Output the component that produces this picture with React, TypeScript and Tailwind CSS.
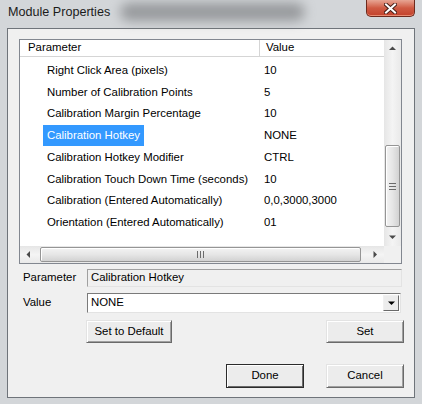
import React from 'react';

const rows: [string, string][] = [
  ['Right Click Area (pixels)', '10'],
  ['Number of Calibration Points', '5'],
  ['Calibration Margin Percentage', '10'],
  ['Calibration Hotkey', 'NONE'],
  ['Calibration Hotkey Modifier', 'CTRL'],
  ['Calibration Touch Down Time (seconds)', '10'],
  ['Calibration (Entered Automatically)', '0,0,3000,3000'],
  ['Orientation (Entered Automatically)', '01'],
];

function Arrow({ dir, color = '#4a4a4a' }: { dir: 'up' | 'down' | 'left' | 'right'; color?: string }) {
  const pts = {
    up: '0,4 7,4 3.5,0.5',
    down: '0,0.5 7,0.5 3.5,4',
    left: '4,0 4,7 0.5,3.5',
    right: '0.5,0 0.5,7 4,3.5',
  }[dir];
  const vertical = dir === 'up' || dir === 'down';
  return (
    <svg width={vertical ? 7 : 5} height={vertical ? 5 : 7} viewBox={vertical ? '0 0 7 5' : '0 0 5 7'}>
      <polygon points={pts} fill={color} />
    </svg>
  );
}

function Button({ label, isDefault, className }: { label: string; isDefault?: boolean; className: string }) {
  return (
    <button
      className={
        'flex items-center justify-center bg-[#ececec] text-[11.4px] text-black ' +
        (isDefault
          ? 'border border-[#2b2b2b] shadow-[inset_1px_1px_0_#ffffff,inset_-1px_-1px_0_#6a6a6a] '
          : 'border border-t-[#e3e3e3] border-l-[#e3e3e3] border-r-[#6a6a6a] border-b-[#6a6a6a] shadow-[inset_1px_1px_0_#ffffff,inset_-1px_-1px_0_#a0a0a0] ') +
        className
      }
    >
      {label}
    </button>
  );
}

export default function App() {
  return (
    <div className="relative flex h-[404px] w-[422px] flex-col overflow-hidden bg-[#d3d6d9] font-['Liberation_Sans',Arial,sans-serif] text-[11.4px] text-black">
      {/* title bar */}
      <div className="relative flex h-[28px] shrink-0 items-start">
        <div className="absolute left-[120px] top-[3px] h-[18px] w-[185px] rounded-full bg-[#6f7174] opacity-60 blur-[6px]" />
        <span className="relative pl-[8px] pt-[4px] text-[12.6px] leading-[16px] text-[#1b1b1b]">Module Properties</span>
        <div className="relative ml-auto mr-[7px] flex h-[17px] w-[49px] items-center justify-center rounded-b-[5px] border border-t-0 border-[#6d2a1d] bg-gradient-to-b from-[#e7a594] via-[#cf5a43] to-[#c2412b] shadow-[inset_0_-1px_0_#e88b72]">
          <svg width="13" height="11" viewBox="0 0 13 11">
            <path d="M2 1.5 L11 9.5 M11 1.5 L2 9.5" stroke="#4a2018" strokeWidth="4" strokeLinecap="square" />
            <path d="M2 1.5 L11 9.5 M11 1.5 L2 9.5" stroke="#ffffff" strokeWidth="2" strokeLinecap="square" />
          </svg>
        </div>
      </div>

      {/* client area */}
      <div className="mx-[7px] flex h-[370px] shrink-0 flex-col border border-[#6f747a] bg-[#f0f0f0]">
        {/* list view */}
        <div className="ml-[11px] mt-[10px] grid h-[225px] w-[383px] grid-cols-[1fr_17px] grid-rows-[1fr_17px] border border-[#828790] bg-white">
          <div className="flex flex-col overflow-hidden">
            <div className="flex h-[17px] shrink-0 border-b border-[#d5d5d5] bg-white">
              <div className="flex w-[240px] items-center border-r border-[#d5d5d5] pl-[8px]">Parameter</div>
              <div className="flex items-center pl-[6px]">Value</div>
            </div>
            <div className="pt-[2.5px]">
              {rows.map(([name, value], i) => (
                <div key={name} className="flex h-[21.75px] items-center">
                  <div className="w-[240px] pl-[23px]">
                    <span
                      className={
                        'inline-flex h-[21px] items-center px-[4px] ' + (i === 3 ? 'bg-[#3399ff] text-white' : '')
                      }
                    >
                      {name}
                    </span>
                  </div>
                  <div className="pl-[4px]">{value}</div>
                </div>
              ))}
            </div>
          </div>

          {/* vertical scrollbar */}
          <div className="flex flex-col bg-gradient-to-r from-[#e6e6e6] via-[#f4f4f4] to-[#e9e9e9]">
            <div className="flex h-[17px] items-center justify-center">
              <Arrow dir="up" />
            </div>
            <div className="relative h-[172px]">
              <div className="absolute left-[1px] top-[88px] flex h-[82px] w-[15px] flex-col items-center justify-center gap-[2px] rounded-[2px] border border-[#959595] bg-gradient-to-r from-[#f3f3f3] via-[#e6e6e6] to-[#d2d2d2] shadow-[inset_1px_1px_0_#ffffff]">
                <div className="h-px w-[7px] bg-[#6b6b6b]" />
                <div className="h-px w-[7px] bg-[#6b6b6b]" />
                <div className="h-px w-[7px] bg-[#6b6b6b]" />
              </div>
            </div>
            <div className="flex h-[17px] items-center justify-center">
              <Arrow dir="down" />
            </div>
          </div>

          {/* horizontal scrollbar */}
          <div className="flex h-[17px] bg-gradient-to-b from-[#e6e6e6] via-[#f4f4f4] to-[#e9e9e9]">
            <div className="flex w-[17px] items-center justify-center">
              <Arrow dir="left" />
            </div>
            <div className="relative flex-1">
              <div className="absolute left-[3px] top-[1px] flex h-[15px] w-[321px] items-center justify-center gap-[2px] rounded-[2px] border border-[#959595] bg-gradient-to-b from-[#f3f3f3] via-[#e6e6e6] to-[#d2d2d2] shadow-[inset_1px_1px_0_#ffffff]">
                <div className="h-[7px] w-px bg-[#6b6b6b]" />
                <div className="h-[7px] w-px bg-[#6b6b6b]" />
                <div className="h-[7px] w-px bg-[#6b6b6b]" />
              </div>
            </div>
            <div className="flex w-[17px] items-center justify-center">
              <Arrow dir="right" />
            </div>
          </div>
          <div className="bg-[#f0f0f0]" />
        </div>

        {/* parameter field */}
        <div className="mt-[5px] flex items-center">
          <div className="w-[79px] pl-[15px]">Parameter</div>
          <div className="flex h-[18px] w-[315px] items-center border border-t-[#a0a0a0] border-l-[#a0a0a0] border-r-[#e3e3e3] border-b-[#e3e3e3] bg-[#f0f0f0] pl-[3px]">
            Calibration Hotkey
          </div>
        </div>

        {/* value combo */}
        <div className="mt-[6px] flex items-center">
          <div className="w-[79px] pl-[15px]">Value</div>
          <div className="flex h-[20px] w-[314px] items-center border border-t-[#7a7a7a] border-l-[#7a7a7a] border-r-[#e3e3e3] border-b-[#e3e3e3] bg-white">
            <span className="flex-1 pl-[3px]">NONE</span>
            <div className="mr-px flex h-[16px] w-[16px] items-center justify-center border border-t-[#f0f0f0] border-l-[#f0f0f0] border-r-[#6a6a6a] border-b-[#6a6a6a] bg-[#ececec]">
              <Arrow dir="down" color="#000000" />
            </div>
          </div>
        </div>

        {/* set buttons */}
        <div className="mt-[7px] flex">
          <Button label="Set to Default" className="ml-[78px] h-[23px] w-[86px]" />
          <Button label="Set" className="ml-auto mr-[10px] h-[23px] w-[78px]" />
        </div>

        {/* dialog buttons */}
        <div className="mt-[21px] flex justify-end gap-[22px] pr-[10px]">
          <Button label="Done" isDefault className="h-[24px] w-[78px]" />
          <Button label="Cancel" className="h-[24px] w-[78px]" />
        </div>
      </div>
    </div>
  );
}
